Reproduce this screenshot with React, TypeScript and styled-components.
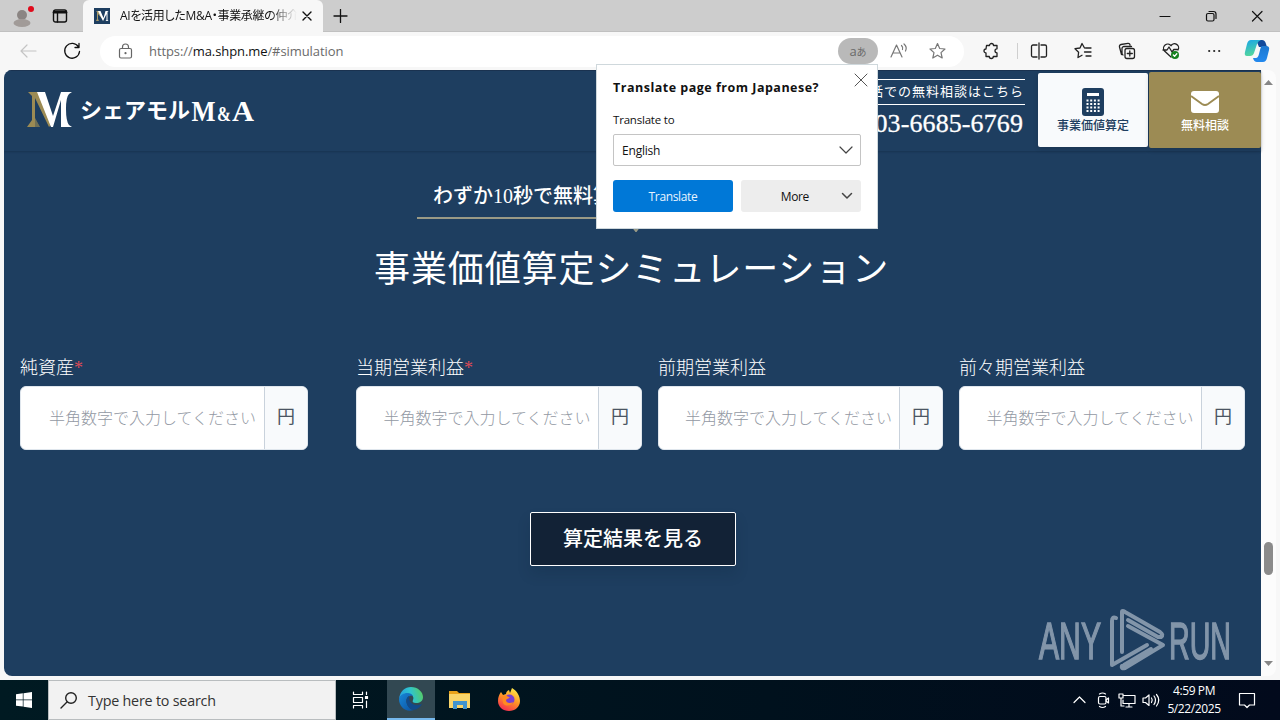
import React from "react";
import styled, { createGlobalStyle } from "styled-components";

const ui = `"Open Sans", "Noto Sans", "Noto Sans CJK JP", sans-serif`;
const serif = `"Liberation Serif", "Noto Sans CJK JP", serif`;

const Global = createGlobalStyle`
  * { box-sizing: border-box; }
  body { margin: 0; overflow: hidden; background: #f7f7f7; }
  button { font: inherit; border: 0; padding: 0; }
`;

const Screen = styled.div`
  width: 1280px;
  height: 720px;
  display: flex;
  flex-direction: column;
  position: relative;
  background: #f7f7f7;
  font-family: ${ui};
`;

const T = styled.span<{ $size: number; $ls?: number; $color?: string; $weight?: number }>`
  font-size: ${(p) => p.$size}px;
  letter-spacing: ${(p) => p.$ls ?? 0}px;
  color: ${(p) => p.$color ?? "inherit"};
  font-weight: ${(p) => p.$weight ?? 400};
  white-space: nowrap;
`;

const TabStrip = styled.div`
  height: 32px;
  flex: none;
  display: flex;
  align-items: center;
  background: #cdcdcd;
  border-bottom: 1px solid #c0c0c0;
`;
const StripLeft = styled.div`
  width: 83px;
  display: flex;
  align-items: center;
  padding-left: 11px;
  gap: 17px;
`;
const Tab = styled.div`
  width: 240px;
  height: 32px;
  margin-bottom: -1px;
  padding: 0 11px;
  display: flex;
  align-items: center;
  justify-content: space-between;
  background: #f7f7f7;
  border-radius: 6px 6px 0 0;
`;
const TabTitle = styled.div`
  width: 177px;
  margin-left: 5px;
  overflow: hidden;
  white-space: nowrap;
  font-size: 12px;
  font-feature-settings: "palt";
  letter-spacing: -0.3px;
  line-height: 20px;
  color: #111;
  -webkit-mask-image: linear-gradient(90deg, #000 150px, transparent 177px);
`;
const WindowButtons = styled.div`
  margin-left: auto;
  display: flex;
  align-items: center;
  padding-right: 17px;
  gap: 34px;
`;

const Toolbar = styled.div`
  height: 38px;
  flex: none;
  display: flex;
  align-items: center;
  padding-left: 19px;
`;
const Address = styled.div`
  width: 864px;
  height: 31px;
  margin-left: 19px;
  padding: 0 17px 0 17px;
  display: flex;
  align-items: center;
  border-radius: 16px;
  background: #fff;
`;
const Url = styled.div`
  margin-left: 15px;
  font-size: 13px;
  letter-spacing: -0.08px;
  color: #6a6a6a;
  b { font-weight: 400; color: #111; }
`;
const TranslatePill = styled.div`
  width: 40px;
  height: 26px;
  margin-left: auto;
  border-radius: 13px;
  background: #b9b9b9;
  color: #6a6a6a;
  display: flex;
  align-items: center;
  justify-content: center;
`;
const Tools = styled.div`
  flex: 1;
  display: flex;
  align-items: center;
  padding-left: 18px;
  gap: 26px;
  > :last-child { margin-left: -4px; }
`;
const Separator = styled.i`
  width: 1px;
  height: 16px;
  margin: 0 -14px 0 -9px;
  background: #cfcfcf;
`;

const Viewport = styled.div`
  height: 606px;
  flex: none;
  display: flex;
  margin: 0 4px 4px;
  border-radius: 8px;
  overflow: hidden;
  background: #fcfcfc;
`;
const Page = styled.main`
  width: 1257px;
  background: #1e3e60;
  color: #fff;
  font-family: ${serif};
  display: flex;
  flex-direction: column;
`;
const Scroll = styled.div`
  width: 15px;
  display: flex;
  flex-direction: column;
  align-items: center;
  padding: 10px 0;
`;
const Thumb = styled.i`
  width: 9px;
  height: 33px;
  margin-top: 457px;
  margin-bottom: auto;
  border-radius: 5px;
  background: #8b8b8b;
`;

const SiteHeader = styled.header`
  height: 81px;
  flex: none;
  display: flex;
  align-items: flex-start;
  border-top: 1px solid #1a3250;
  box-shadow: 0 1px 2px rgba(10, 25, 45, 0.3);
`;
const Phone = styled.div`
  margin: 8px 13px 0 auto;
  display: flex;
  flex-direction: column;
  align-items: flex-end;
`;
const PhoneCaption = styled.div`
  height: 26px;
  padding-right: 1px;
  border: solid #fff;
  border-width: 1px 0;
  font-size: 13px;
  letter-spacing: 1px;
  line-height: 23px;
`;
const PhoneNumber = styled.div`
  font-size: 26px;
  letter-spacing: 0.1px;
  line-height: 38px;
  padding-right: 2px;
  -webkit-text-stroke: 0.3px #fff;
`;
const HeaderButton = styled.button<{ $gold?: boolean }>`
  width: ${(p) => (p.$gold ? 112 : 110)}px;
  height: ${(p) => (p.$gold ? 76 : 74)}px;
  margin: ${(p) => (p.$gold ? "1px 0 0 1px" : "2px 0 0")};
  padding-top: ${(p) => (p.$gold ? 17 : 14)}px;
  display: flex;
  flex-direction: column;
  align-items: center;
  background: ${(p) => (p.$gold ? "#9c8b54" : "#f8fafc")};
  color: ${(p) => (p.$gold ? "#fff" : "#1e3e60")};
  border-radius: 2px;
  box-shadow: 0 2px 5px rgba(0, 0, 0, 0.15);
  font-size: 12px;
  font-weight: 500;
  line-height: ${(p) => (p.$gold ? 21 : 19)}px;
`;

const Lead = styled.div`
  width: 431px;
  height: 38px;
  margin: 30px auto 0 413px;
  padding-left: 16px;
  border-bottom: 2px solid #9a9a86;
  font-size: 20px;
  line-height: 30px;
  font-weight: 500;
  white-space: nowrap;
`;
const LeadTail = styled.svg`
  display: block;
  flex: none;
  margin-left: 623px;
`;
const Title = styled.h1`
  margin: 8px 0 0 370px;
  font-size: 36px;
  font-weight: 400;
  letter-spacing: 0.9px;
  line-height: 60px;
  height: 60px;
`;
const FormRow = styled.div`
  display: flex;
  margin: 55px 0 0 16px;
`;
const Field = styled.label<{ $w: number; $gap: number }>`
  width: ${(p) => p.$w}px;
  margin-right: ${(p) => p.$gap}px;
  display: flex;
  flex-direction: column;
`;
const FieldLabel = styled.span`
  height: 31px;
  font-size: 18px;
  line-height: 27px;
  font-weight: 300;
  em { font-style: normal; color: #dc4a57; }
`;
const InputBox = styled.span`
  height: 64px;
  display: flex;
  border-radius: 6px;
  overflow: hidden;
  background: #fff;
  border: 1px solid #dfe6ed;
`;
const Placeholder = styled.span<{ $inset: number }>`
  flex: 1;
  padding-left: ${(p) => p.$inset}px;
  font-size: 16px;
  line-height: 63px;
  color: #9298a3;
  font-weight: 300;
  white-space: nowrap;
`;
const Unit = styled.span`
  width: 43px;
  border-left: 1px solid #c9d2dc;
  background: #f8fafc;
  color: #4b5563;
  font-size: 18px;
  line-height: 61px;
  text-align: center;
`;
const Submit = styled.button`
  width: 206px;
  height: 54px;
  margin: 62px 0 0 526px;
  flex: none;
  border: 1px solid #fff;
  border-radius: 2px;
  background: #122236;
  color: #fff;
  font-size: 20px;
  font-weight: 500;
  line-height: 50px;
  box-shadow: 0 8px 14px rgba(10, 25, 45, 0.14);
`;

const Popup = styled.section`
  position: absolute;
  left: 596px;
  top: 64px;
  width: 282px;
  height: 165px;
  padding: 14px 16px 0;
  background: #fff;
  border: 1px solid #cfd8dc;
  color: #111;
  font-size: 12px;
`;
const PopupHead = styled.div`
  height: 32px;
  display: flex;
  justify-content: space-between;
  line-height: 17px;
  svg { margin: -6px -7px 0 0; }
`;
const PopupLabel = styled.div`
  height: 23px;
  line-height: 17px;
  font-size: 11.5px;
  letter-spacing: -0.2px;
`;
const Select = styled.div`
  height: 32px;
  padding: 0 7px 0 8px;
  display: flex;
  align-items: center;
  justify-content: space-between;
  border: 1px solid #c4c4c4;
  border-radius: 2px;
`;
const PopupButtons = styled.div`
  display: flex;
  gap: 8px;
  margin-top: 14px;
`;
const PopupButton = styled.button<{ $primary?: boolean }>`
  width: 120px;
  height: 32px;
  border-radius: 3px;
  background: ${(p) => (p.$primary ? "#0078d7" : "#ededed")};
  color: ${(p) => (p.$primary ? "#e8f4ff" : "#111")};
  display: flex;
  align-items: center;
  justify-content: ${(p) => (p.$primary ? "center" : "flex-end")};
  gap: 31px;
  letter-spacing: -0.35px;
  padding-right: ${(p) => (p.$primary ? 0 : 7)}px;
`;

const Watermark = styled.svg`
  position: absolute;
  left: 1034px;
  top: 604px;
`;

const Taskbar = styled.footer`
  height: 40px;
  display: flex;
  background: linear-gradient(90deg, #001a22, #00111d 60%, #020a1c);
`;
const TaskButton = styled.div<{ $w: number; $active?: boolean }>`
  width: ${(p) => p.$w}px;
  height: 40px;
  display: flex;
  align-items: center;
  justify-content: center;
  background: ${(p) => (p.$active ? "#324852" : "transparent")};
  border-bottom: ${(p) => (p.$active ? "2px solid #76b9ed" : "0")};
`;
const Search = styled.div`
  width: 288px;
  height: 40px;
  padding-left: 11px;
  display: flex;
  align-items: center;
  gap: 10px;
  background: #f2f2f2;
  border: 1px solid #b9bdbf;
  color: #333;
`;
const Tray = styled.div`
  margin-left: auto;
  display: flex;
  align-items: center;
  color: #fff;
  padding-right: 24px;
`;
const Clock = styled.div`
  width: 60px;
  margin: 0 14px 0 1px;
  padding-top: 0;
  text-align: center;
  font-size: 12px;
  letter-spacing: -0.4px;
  line-height: 18px;
`;

type IconProps = { w: number; h?: number; color?: string; sw?: number; children: React.ReactNode };
const IconSvg = styled.svg`
  flex: none;
`;
const Icon = ({ w, h, color = "#222", sw = 1.2, children }: IconProps) => (
  <IconSvg width={w} height={h ?? w} viewBox={`0 0 ${w} ${h ?? w}`} fill="none" stroke={color} strokeWidth={sw} strokeLinecap="round" strokeLinejoin="round">
    {children}
  </IconSvg>
);

const Chevron = ({ small }: { small?: boolean }) => (
  <Icon w={14} h={10} color="#444" sw={small ? 1.5 : 1.2}><path d={small ? "M2.5 2.5L7 7l4.5-4.5" : "M1 2l6 6 6-6"} /></Icon>
);

const LogoSvg = styled.svg`
  margin: 12px 0 0 20px;
`;
const Logo = () => (
  <LogoSvg width="240" height="50" viewBox="0 0 240 50">
    <g fill="#9c8b54">
      <path d="M4 9h10l13 33-2 2L11 15v20l5 9H3l5-7V13z" />
    </g>
    <g fill="#fff">
      <path d="M13 9h8l8 24 8-24h3v35h-3V17l-8 27h-2z" />
      <path d="M40 9h8l-3 2q-3 3-3 15t3 16l3 2h-8z" />
    </g>
    <path d="M11 15v20l5 9H11z" fill="#1e3e60" opacity=".35" />
    <text x="56" y="35" fontFamily={serif} fontWeight="600" fontSize="22" fill="#fff" textLength="110" lengthAdjust="spacingAndGlyphs">シェアモル</text>
    <g fontFamily="Liberation Serif, serif" fontWeight="700" fill="#fff">
      <text x="167.500" y="37.500" fontSize="30" textLength="24" lengthAdjust="spacingAndGlyphs">M</text>
      <text x="193" y="37.500" fontSize="20" textLength="14" lengthAdjust="spacingAndGlyphs">&amp;</text>
      <text x="208" y="37.500" fontSize="30" textLength="22" lengthAdjust="spacingAndGlyphs">A</text>
    </g>
  </LogoSvg>
);

const fields = [
  { label: "純資産", required: true, w: 288, gap: 48, inset: 28 },
  { label: "当期営業利益", required: true, w: 286, gap: 16, inset: 26.5 },
  { label: "前期営業利益", required: false, w: 285, gap: 16, inset: 26 },
  { label: "前々期営業利益", required: false, w: 286, gap: 0, inset: 26.5 },
];

export default function App() {
  return (
    <Screen>
      <Global />
      <TabStrip>
        <StripLeft>
          <svg width="24" height="26" viewBox="0 0 24 26">
            <circle cx="11" cy="12" r="5" fill="#8b8583" />
            <ellipse cx="11" cy="20" rx="8.5" ry="4" fill="#a19b98" />
            <circle cx="20" cy="6" r="3" fill="#e00b1c" />
          </svg>
          <Icon w={16} h={14} color="#111" sw={1.4}><rect x="1.5" y="1" width="13" height="12" rx="2" /><path d="M2 3.2h12" strokeWidth="2.4" /><path d="M5.5 4v9" /></Icon>
        </StripLeft>
        <Tab>
          <svg width="16" height="16" viewBox="0 0 16 16">
            <path fill="#1e3e60" d="M0 0h16v16H0z" />
            <path d="M2 3h3l5 10L4 6v5l1 2H2l1-2V4z" fill="#a89968" />
            <path d="M4 3h2.500l3 7 2-7h3l-1 1v8l1 1h-3l1-1V6L9 13z" fill="#fff" />
          </svg>
          <TabTitle>AIを活用したM&amp;A・事業承継の仲介</TabTitle>
          <Icon w={10} color="#111" sw={1.4}><path d="M1 1l8 8M9 1L1 9" /></Icon>
        </Tab>
        <Icon w={34} h={14} color="#111" sw={1.3}><path d="M17.500 .5v13M11 7h13" /></Icon>
        <WindowButtons>
          <Icon w={12} color="#111"><path d="M1 6.500h10" /></Icon>
          <Icon w={12} color="#111"><rect x="1.500" y="3.500" width="7.500" height="7.500" rx="1.500" /><path d="M4 1.500h4.500a2.500 2.500 0 012.500 2.500v4.500" /></Icon>
          <Icon w={12} color="#111"><path d="M1.500 1.500l9.500 9.500M11 1.500L1.500 11" /></Icon>
        </WindowButtons>
      </TabStrip>

      <Toolbar>
        <Icon w={18} color="#c4c4c4"><path d="M17 9H2M8 3L2 9l6 6" /></Icon>
        <Icon w={44} h={18} color="#111" sw={1.3}><path d="M34 1v0" stroke="none" /><path d="M41.500 5A7.400 7.400 0 1042.500 9.500M42 1.500v4h-4" /></Icon>
        <Address>
          <Icon w={17} color="#666"><rect x="2.500" y="5.500" width="12" height="9.500" rx="1.500" /><path d="M5.500 5.500V4a3 3 0 016 0v1.500" /><circle cx="8.500" cy="10.200" r=".5" fill="#666" /></Icon>
          <Url>https://<b>ma.shpn.me</b>/#simulation</Url>
          <TranslatePill><T $size={13}>a</T><T $size={10}>あ</T></TranslatePill>
          <Icon w={69} h={18} color="#777"><path d="M13 15L18.500 3 24 15M15 11h7M23.500 3.500q2 2 1 4M26 2q3.500 3 1.500 7" /><path transform="translate(50.500 0)" d="M9 1.500l2.200 5 5.300.5-4 3.600 1.200 5.400L9 13.200 4.300 16l1.200-5.400L1.500 7l5.300-.5z" /></Icon>
        </Address>
        <Tools>
          <Icon w={18} color="#222" sw={1.3}><path d="M4.500 3.500h3a2 2 0 014 0h3.500v3.300a2 2 0 000 4v3.700h-3.700a2 2 0 01-4 0H4V11a2 2 0 010-4z" /></Icon>
          <Separator />
          <Icon w={18} color="#222" sw={1.3}><path d="M7 3H3a1.500 1.500 0 00-1.500 1.500v9A1.500 1.500 0 003 15h4M11 3h4a1.500 1.500 0 011.500 1.500v9A1.500 1.500 0 0115 15h-4M9 1v16" /></Icon>
          <Icon w={18} color="#222" sw={1.3}><path d="M10.500 6L8 1.500 6 6l-5 .7 3.600 3.500L4 15.500l4-2.300M11.500 6H17M10.500 10H17M12 14h5" /></Icon>
          <Icon w={18} color="#222" sw={1.3}><path d="M3.500 12.500L1.500 5A2 2 0 013 2.500l7-1.200A1.800 1.800 0 0112 3M5 13a2 2 0 01-1-2V6.500a2 2 0 012-2h7.500" /><rect x="7" y="6.500" width="9.500" height="10" rx="2" /><path d="M11.800 9v5M9.300 11.500h5" /></Icon>
          <Icon w={18} color="#222" sw={1.3}><path d="M9 15L2.500 9A4 4 0 019 3.700 4 4 0 0116 8M1 8h4l2-3 3 5 1.800-2.500H16" /><circle cx="13" cy="13" r="4" fill="#16811f" stroke="none" /><path d="M11.300 13l1.300 1.300 2.200-2.500" stroke="#fff" /></Icon>
          <Icon w={16} color="#222"><g fill="#222" stroke="none"><circle cx="3.200" cy="8" r="1.100" /><circle cx="8.200" cy="8" r="1.100" /><circle cx="13.200" cy="8" r="1.100" /></g></Icon>
          <svg width="26" height="24" viewBox="0 0 26 24">
            <defs>
              <linearGradient id="ca" x1="0" y1="0" x2=".3" y2="1"><stop stopColor="#18a5e8" /><stop offset="1" stopColor="#53d69d" /></linearGradient>
              <linearGradient id="cb" x1="0" y1="0" x2="0" y2="1"><stop stopColor="#1c78d0" /><stop offset="1" stopColor="#2389ee" /></linearGradient>
            </defs>
            <path d="M12 1h6q3 0 4 4l1 3h-8z" fill="#124a9b" />
            <path d="M18 7h4q4 0 3 4l-2 8q-1 4-4 4h-6q-3 0-4-4h3q2 0 3-4l1-4q1-4 2-4z" fill="url(#cb)" />
            <path d="M7 1h10q-3 1-4 4l-3 9q-1 3-4 3H3q-3 0-2-4L3 5q1-4 4-4z" fill="url(#ca)" />
          </svg>
        </Tools>
      </Toolbar>

      <Viewport>
        <Page>
          <SiteHeader>
            <Logo />
            <Phone>
              <PhoneCaption>お電話での無料相談はこちら</PhoneCaption>
              <PhoneNumber>03-6685-6769</PhoneNumber>
            </Phone>
            <HeaderButton>
              <svg width="24" height="30" viewBox="0 0 24 30">
                <rect x="1" y="1" width="22" height="28" rx="3" fill="#1e3e60" />
                <path d="M6 6h12v3H6z" fill="#fff" />
                <path d="M5.500 13.500h14M5.500 17h14M5.500 20.500h14M5.500 24h14" stroke="#fff" strokeWidth="2" strokeDasharray="2 1.700" />
              </svg>
              事業価値算定
            </HeaderButton>
            <HeaderButton $gold>
              <svg width="30" height="27" viewBox="0 0 30 27">
                <rect x="1" y="2" width="28" height="22" rx="3" fill="#fff" />
                <path d="M1 7l11 8q3 2 6 0l11-8" fill="none" stroke="#9c8b54" strokeWidth="2" />
              </svg>
              無料相談
            </HeaderButton>
          </SiteHeader>
          <Lead>わずか10秒で無料算定</Lead>
          <LeadTail width="20" height="13" viewBox="0 0 20 13"><path d="M0 0l9 12 9-12" fill="none" stroke="#9a9a86" strokeWidth="2" /></LeadTail>
          <Title>事業価値算定シミュレーション</Title>
          <FormRow>
            {fields.map((f) => (
              <Field key={f.label} $w={f.w} $gap={f.gap}>
                <FieldLabel>{f.label}{f.required && <em>*</em>}</FieldLabel>
                <InputBox><Placeholder $inset={f.inset}>半角数字で入力してください</Placeholder><Unit>円</Unit></InputBox>
              </Field>
            ))}
          </FormRow>
          <Submit>算定結果を見る</Submit>
        </Page>
        <Scroll>
          <svg width="9" height="5"><path d="M0 5l4.500-5L9 5z" fill="#868686" /></svg>
          <Thumb />
          <svg width="9" height="5"><path d="M0 0l4.500 5L9 0z" fill="#868686" /></svg>
        </Scroll>
      </Viewport>

      <Taskbar>
        <TaskButton $w={48}><svg width="16" height="16" viewBox="0 0 16 16" fill="#fff"><path d="M0 2.300L6.800 1.300v6.300H0zM7.500 1.200L16 0v7.600H7.500zM0 8.300h6.800v6.300L0 13.700zM7.500 8.300H16V16l-8.500-1.200z" /></svg></TaskButton>
        <Search>
          <Icon w={18} color="#222" sw={1.4}><circle cx="11" cy="7" r="5.300" /><path d="M7 11l-6 6" /></Icon>
          <T $size={14.300} $ls={-0.200}>Type here to search</T>
        </Search>
        <TaskButton $w={51}><Icon w={22} h={18} color="#fff"><path d="M2.500 1v2.500h9V1M2.500 17v-2.500h9V17M2.500 6.500h9v5h-9zM15.500 1v2.500M15.500 10v6.500" /><path d="M14.500 5.500h2v2h-2z" fill="#fff" /></Icon></TaskButton>
        <TaskButton $w={48} $active>
          <svg width="26" height="26" viewBox="0 0 26 26">
            <defs>
              <linearGradient id="ea" x1="0" y1=".5" x2="1" y2=".3"><stop stopColor="#259ee0" /><stop offset=".5" stopColor="#2fc5ce" /><stop offset="1" stopColor="#58cc61" /></linearGradient>
              <linearGradient id="eb" x1="0" y1="0" x2="1" y2="1"><stop stopColor="#1787d8" /><stop offset="1" stopColor="#0c51a0" /></linearGradient>
            </defs>
            <path d="M1 13C2 5 7 1 13 1c7 0 12 5 12 10 0 4-3 6-7 6-3 0-4-1-3-3 2-4-3-7-7-6-3 0-6 2-7 5z" fill="url(#ea)" />
            <path d="M1 13c1-4 5-6 8-6 3 0 5 1 6 3-5-1-8 3-6 8 1 3 4 6 7 6-8 3-15-3-15-11z" fill="url(#eb)" />
            <path d="M11 10c-4 2-4 12 5 14 4-1 7-4 8-6-6 3-14 0-13-8z" fill="#114a8b" />
          </svg>
        </TaskButton>
        <TaskButton $w={49}>
          <svg width="22" height="20" viewBox="0 0 22 20"><path d="M0 1h8l2 2h11v4H0z" fill="#e8a21b" /><path d="M0 4h21v14H0z" fill="#f8d46a" /><path d="M4 11h14v8h-4v-4H8v4H4z" fill="#3f93cf" /></svg>
        </TaskButton>
        <TaskButton $w={49}>
          <svg width="24" height="26" viewBox="0 0 24 26">
            <defs><linearGradient id="ff" x1=".8" y1="0" x2=".3" y2="1"><stop stopColor="#fff04a" /><stop offset=".5" stopColor="#ff9426" /><stop offset="1" stopColor="#f52c52" /></linearGradient></defs>
            <path d="M4 5l2 3 3-1c0-2 1-3 3-4l1 3 2-5c5 3 8 8 8 13 0 6-5 10-11 10S1 20 1 14c0-4 1-6 3-9z" fill="url(#ff)" />
            <circle cx="12.500" cy="12.500" r="5" fill="#7b3fd0" /><path d="M5 9c3-1 6 0 8 2-2 0-3 1-4 2 0 3 4 4 7 2-1 4-8 5-10 1z" fill="#ff8a22" />
          </svg>
        </TaskButton>
        <Tray>
          <Icon w={24} h={18} color="#fff"><path d="M7 11.500L12.500 6l5.500 5.500" /></Icon>
          <Icon w={24} h={18} color="#fff"><rect x="7.500" y="5.500" width="7.500" height="7.500" rx="1.500" /><path d="M15 9l2.500-2v5L15 10M8.500 3q3-2 6 0M8.500 15.500q3 2 6 0" /></Icon>
          <Icon w={24} h={18} color="#fff"><path d="M9 4.500h11v8H8V9M4 3h4v4H4zM6 7v8h3M11 16h6M14 12.500V16" /></Icon>
          <Icon w={24} h={18} color="#fff"><path d="M4 7h2.500L10 4v10.500L6.500 11.500H4zM12.500 7q1.500 2 0 4.500M15 5q3 4 0 8.500M17.500 3.500q4.500 5.500 0 11.500" /></Icon>
          <Clock>4:59 PM<br />5/22/2025</Clock>
          <Icon w={18} color="#fff"><path d="M1.500 2.500h15v11.500h-5L9 16.500 6.500 14h-5z" /></Icon>
        </Tray>
      </Taskbar>

      <Watermark width="204" height="72" viewBox="0 0 204 72">
        <g opacity=".55">
          <g fill="#d5dce6" stroke="#d5dce6" strokeWidth="1.500" fontFamily="Liberation Sans Narrow, Liberation Sans, sans-serif" fontSize="51">
            <text x="5" y="54.500" textLength="62" lengthAdjust="spacingAndGlyphs">ANY</text>
            <text x="135" y="54.500" textLength="62" lengthAdjust="spacingAndGlyphs">RUN</text>
          </g>
          <g fill="none" stroke="#d5dce6" strokeWidth="4" strokeLinejoin="round" strokeLinecap="round">
            <path d="M82 14q-4-2-4 3v44l35-20M88 48V8q0-2 3 0l35 20q4 3 1 5l-3 0-30-17" />
            <path d="M94 22l35 19-38 23q-4 1-3-2M90 61l27-16" />
          </g>
        </g>
      </Watermark>

      <Popup>
        <PopupHead>
          <T $size={12.500} $ls={0.500} $weight={700}>Translate page from Japanese?</T>
          <Icon w={14} color="#555" sw={1}><path d="M1 1l12 12M13 1L1 13" /></Icon>
        </PopupHead>
        <PopupLabel>Translate to</PopupLabel>
        <Select><T $size={12} $ls={-0.200}>English</T><Chevron /></Select>
        <PopupButtons>
          <PopupButton $primary>Translate</PopupButton>
          <PopupButton>More<Chevron small /></PopupButton>
        </PopupButtons>
      </Popup>
    </Screen>
  );
}
